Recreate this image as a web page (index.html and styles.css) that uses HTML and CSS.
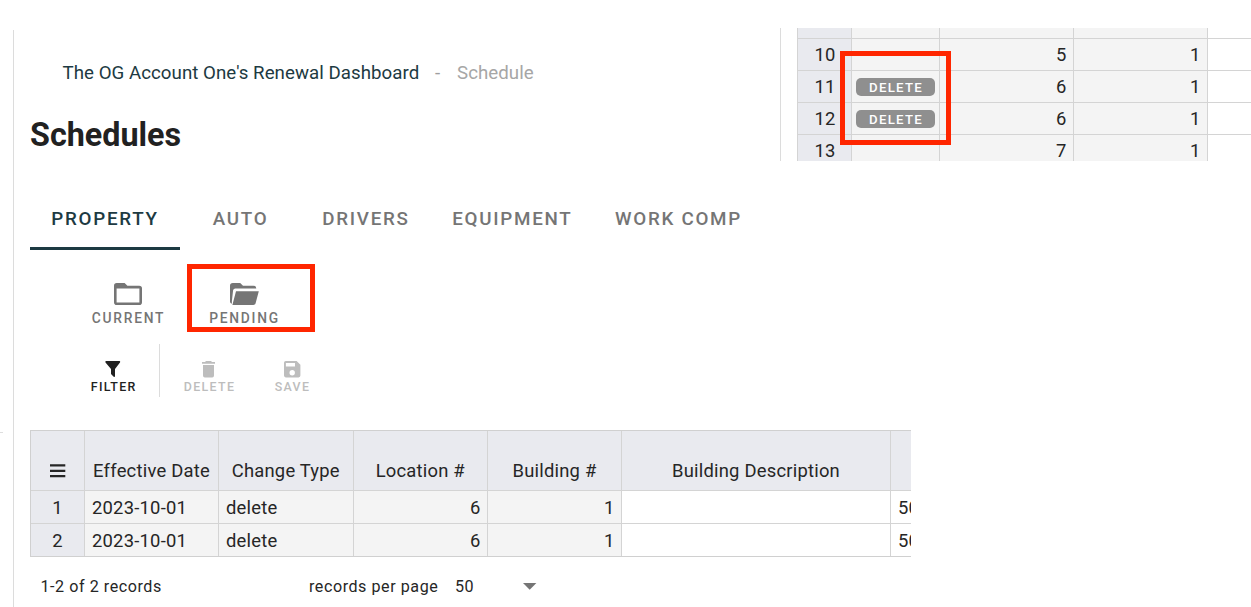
FILE: index.html
```html
<!DOCTYPE html>
<html lang="en">
<head>
<meta charset="utf-8">
<title>Schedules</title>
<link rel="stylesheet" href="styles.css">
</head>
<body>
<div class="gutter"></div>
<main class="panel">
  <div class="top">
    <header class="heading">
      <nav class="crumbs"><a class="crumb-link">The OG Account One's Renewal Dashboard</a><span class="crumb-sep">-</span><span class="crumb-here">Schedule</span></nav>
      <h1 class="title">Schedules</h1>
    </header>
    <section class="excerpt">
      <div class="rows">
        <div class="num"></div><div class="ro"></div><div class="ro"></div><div class="ro"></div><div class="edit"></div>
        <div class="num">10</div><div class="ro"></div><div class="ro">5</div><div class="ro">1</div><div class="edit"></div>
        <div class="num">11</div><div class="ro tagcell"><span class="tag">DELETE</span></div><div class="ro">6</div><div class="ro">1</div><div class="edit"></div>
        <div class="num">12</div><div class="ro tagcell"><span class="tag">DELETE</span></div><div class="ro">6</div><div class="ro">1</div><div class="edit"></div>
        <div class="num">13</div><div class="ro"></div><div class="ro">7</div><div class="ro">1</div><div class="edit"></div>
      </div>
      <div class="mark mark-delete"></div>
    </section>
  </div>
  <nav class="tabs">
    <a class="tab active">PROPERTY</a><a class="tab auto">AUTO</a><a class="tab">DRIVERS</a><a class="tab">EQUIPMENT</a><a class="tab">WORK COMP</a>
  </nav>
  <div class="views">
    <button class="view">
      <svg width="28" height="23" viewBox="0 0 28 23"><path fill="#757575" fill-rule="evenodd" d="M2.7 0H10.6L13.4 2.8H25.2Q28 2.8 28 5.6V19.2Q28 22 25.2 22H2.8Q0 22 0 19.2V2.8Q0 0 2.7 0ZM2.6 5.4V19.4H25.4V5.4Z"/></svg>
      <span>CURRENT</span>
    </button>
    <button class="view pending">
      <svg width="30" height="23" viewBox="0 0 30 23"><path fill="#757575" d="M2.8 0H10.2L13 2.8H23.5Q26.3 2.8 26.3 5.5H5.3Q3.5 5.5 3.1 7.2L1.9 18V20.8Q0 20.5 0 18.8V2.8Q0 0 2.8 0ZM6 8.2H28.8L25.6 20.2Q25.1 22 23.3 22H2.4Z"/></svg>
      <span>PENDING</span>
      <i class="mark mark-pending"></i>
    </button>
  </div>
  <div class="tools">
    <button class="tool filter">
      <svg width="16" height="17" viewBox="0 0 16 17"><path fill="#212121" d="M.8 0H14.7Q15.7.6 15 1.6L10 8V15.2Q9.7 16.3 8.7 15.7L6 13V8L.5 1.6Q0 .6.8 0Z"/></svg>
      <span>FILTER</span>
    </button>
    <button class="tool delete">
      <svg width="14" height="17" viewBox="0 0 14 17"><path fill="#bdbdbd" d="M4 0H9L10 1H13V2.8H0V1H3ZM1 4H12V14.5Q12 16.4 10.2 16.4H2.8Q1 16.4 1 14.5Z"/></svg>
      <span>DELETE</span>
    </button>
    <button class="tool save">
      <svg width="17" height="17" viewBox="0 0 17 17"><path fill="#bdbdbd" fill-rule="evenodd" d="M1.8 0H12.6L16.4 3.7V14.6Q16.4 16.4 14.6 16.4H1.8Q0 16.4 0 14.6V1.8Q0 0 1.8 0ZM1.9 1.9V5.6H11V1.9ZM8.2 9.1A2.7 2.7 0 1 0 8.2 14.5A2.7 2.7 0 1 0 8.2 9.1Z"/></svg>
      <span>SAVE</span>
    </button>
  </div>
  <div class="grid">
    <div class="head menu"><svg width="16" height="14" viewBox="0 0 16 14"><path stroke="#262626" stroke-width="2.3" d="M0 1.4H15.3M0 6.8H15.3M0 12.2H15.3"/></svg></div>
    <div class="head">Effective Date</div><div class="head">Change Type</div><div class="head">Location #</div><div class="head">Building #</div><div class="head">Building Description</div><div class="head"></div>
    <div class="num">1</div><div class="ro left">2023-10-01</div><div class="ro left">delete</div><div class="ro">6</div><div class="ro">1</div><div class="edit"></div><div class="edit">50</div>
    <div class="num">2</div><div class="ro left">2023-10-01</div><div class="ro left">delete</div><div class="ro">6</div><div class="ro">1</div><div class="edit"></div><div class="edit">50</div>
  </div>
  <footer class="pager">
    <span class="count">1-2 of 2 records</span><span class="per">records per page</span><span class="size">50</span>
    <svg width="14" height="7" viewBox="0 0 14 7"><path fill="#757575" d="M0 0H13.4L6.7 6.8Z"/></svg>
  </footer>
</main>
</body>
</html>
```
FILE: styles.css
```css
* { box-sizing: border-box; }
body {
  margin: 0;
  width: 1251px;
  height: 607px;
  display: flex;
  overflow: hidden;
  background: #fff;
  font-family: Roboto, sans-serif;
  color: #262626;
}
.gutter { width: 12.5px; flex: none; height: 433px; }
.gutter::after { content: ""; display: block; margin-top: 432px; width: 3px; height: 1px; background: #dedede; }
.panel { flex: 1; margin-top: 30px; height: 577px; border-left: 1px solid #dcdcdc; padding-left: 16.5px; min-width: 0; }
.top { display: flex; height: 131px; }
.heading { width: 750px; flex: none; padding-top: 30px; }
.crumbs { padding-left: 32.5px; height: 24px; display: flex; font-size: 18.7px; letter-spacing: .04px; line-height: 26px; white-space: nowrap; }
.crumb-link { color: #1d3a42; width: 372.5px; }
.crumb-sep { color: #9e9e9e; width: 22px; }
.crumb-here { color: #a6a6a6; }
.title { margin: 31px 0 0; font-size: 32.3px; line-height: 40px; font-weight: 700; color: #212121; }
.excerpt { position: relative; margin-top: -2px; height: 133px; flex: 1; border-left: 1px solid #dcdcdc; padding-left: 16px; }
.rows {
  display: grid;
  grid-template-columns: 54px 88px 134px 134px 1fr;
  grid-template-rows: 11px 32px 32px 32px 26px;
  border-left: 1px solid #d4d4d4;
  font-size: 18.4px;
  letter-spacing: .2px;
}
.rows > div { border-bottom: 1px solid #d4d4d4; border-right: 1px solid #d4d4d4; line-height: 32px; text-align: right; overflow: hidden; }
.rows > div:nth-child(n+21) { border-bottom: 0; }
.rows > .edit { border-right: 0; }
.num, .head { background: #e9eaef; }
.ro { background: #f4f4f4; padding-right: 6.5px; }
.rows .num { padding-right: 15.5px; }
.rows .tagcell { display: flex; align-items: center; padding: 1px 0 0 4px; }
.tag { width: 79px; height: 18px; border-radius: 5px; background: #8f8f8f; color: #fff; font-size: 13.2px; font-weight: 500; letter-spacing: 1.3px; line-height: 19px; text-align: center; padding-left: 1px; }
.mark { position: absolute; border: 5px solid #ff2600; }
.mark-delete { left: 59px; top: 23px; width: 111px; height: 94px; }
.tabs { display: flex; height: 89px; padding-top: 27px; }
.tab { height: 62px; padding: 18.5px 21.3px 0; line-height: 24px; font-size: 18.8px; font-weight: 500; letter-spacing: 1.72px; color: #757575; white-space: nowrap; }
.tab.active { width: 150px; color: #1d3a42; border-bottom: 3px solid #1d3a42; }
.tab.auto { margin: 0 11.3px 0 11.5px; }
.views { display: flex; height: 94px; padding: 33px 0 0 62px; }
button { border: 0; background: none; padding: 0; font-family: inherit; display: flex; flex-direction: column; align-items: center; }
.view { position: relative; height: 46px; width: 73px; color: #757575; font-size: 13.8px; font-weight: 500; letter-spacing: 1.75px; line-height: 18px; }
.view svg { margin: 0 1px 3px 0; }
.view.pending { margin-left: 43.5px; width: 72px; }
.pending svg { margin-right: -1px; }
.mark-pending { left: -22px; top: -19px; width: 128px; height: 68px; }
.tools { display: flex; height: 86px; padding-left: 60.5px; }
.tool { height: 53px; padding-top: 16.5px; font-size: 12.4px; font-weight: 500; letter-spacing: 1.35px; line-height: 16px; color: #bdbdbd; }
.tool svg { margin: 0 1px 1.5px 0; }
.filter { color: #212121; width: 69.5px; padding-right: 22px; border-right: 1px solid #dcdcdc; }
.delete { margin-left: 23px; width: 53px; }
.save { margin-left: 37.5px; width: 38px; }
.grid {
  display: grid;
  width: 881px;
  grid-template-columns: 54px 134px 134.5px 134.5px 134px 269px 20px;
  grid-template-rows: 60px 33px 32px;
  border: 1px solid #d0d0d0;
  border-right: 0;
  font-size: 18.4px;
  letter-spacing: .22px;
  overflow: hidden;
}
.grid > div { border-right: 1px solid #d4d4d4; border-bottom: 1px solid #d4d4d4; line-height: 33px; text-align: right; white-space: nowrap; overflow: hidden; }
.grid > div:nth-child(7n) { border-right: 0; padding-left: 7px; text-align: left; }
.grid > div:nth-child(n+15) { border-bottom: 0; }
.grid > .head { text-align: center; line-height: 24px; padding-top: 27.5px; }
.grid > .num { text-align: center; }
.grid > .left { text-align: left; padding-left: 7px; }
.grid > .menu { padding-top: 33px; line-height: 0; }
.pager { display: flex; padding: 19px 0 0 10.5px; font-size: 16.1px; letter-spacing: .55px; line-height: 22px; white-space: nowrap; }
.count { width: 268.5px; }
.per { width: 146px; }
.size { width: 68px; }
.pager svg { margin-top: 7px; }
```
